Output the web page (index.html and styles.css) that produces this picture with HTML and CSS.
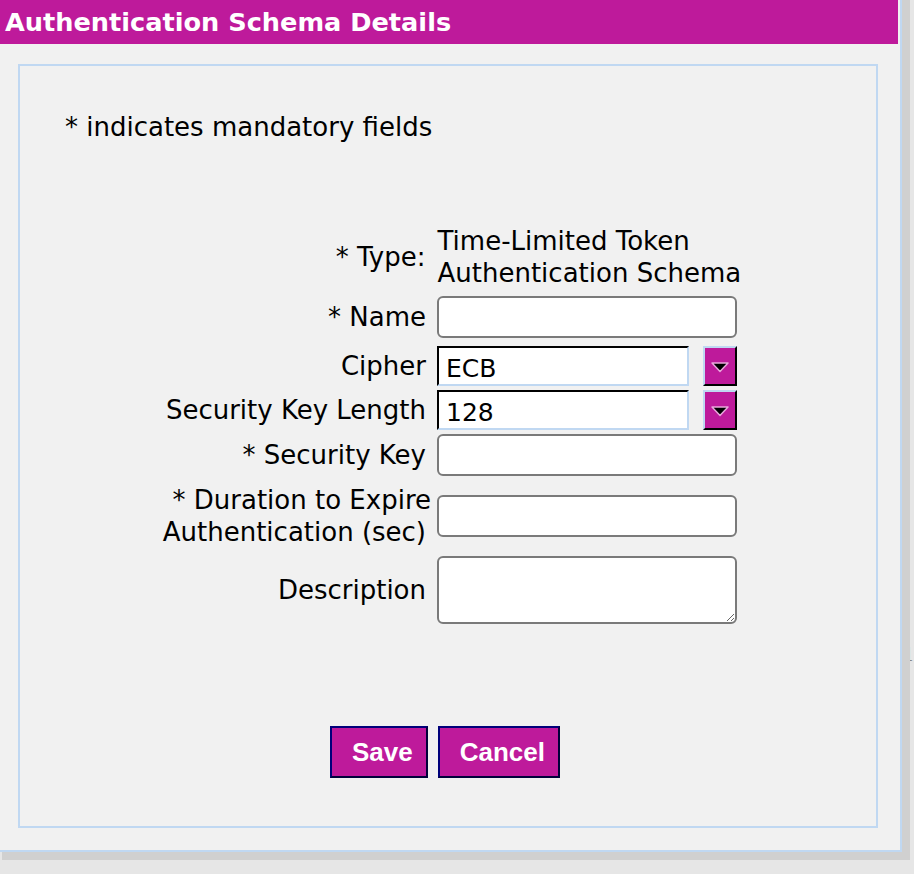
FILE: index.html
```html
<!DOCTYPE html>
<html lang="en">
<head>
<meta charset="utf-8">
<title>Authentication Schema Details</title>
<link rel="stylesheet" href="styles.css">
</head>
<body>
<span class="stray">1</span>
<div class="dialog">
  <div class="dialog-title">Authentication Schema Details</div>
  <div class="panel">
    <p class="note">* indicates mandatory fields</p>
    <div class="form">
      <div class="row row-type">
        <div class="label">* Type:</div>
        <div class="field value">Time-Limited Token<br>Authentication Schema</div>
      </div>
      <div class="row row-name">
        <div class="label">* Name</div>
        <div class="field"><input class="text-input" type="text"></div>
      </div>
      <div class="row row-cipher">
        <div class="label">Cipher</div>
        <div class="field combo">
          <div class="combo-box">ECB</div>
          <div class="combo-btn"><svg width="20" height="12" viewBox="0 0 20 12"><path d="M2 2 L18 2 L10 10.5 Z" fill="#000" stroke="#eaa6dc" stroke-width="1.5" stroke-linejoin="round"/></svg></div>
        </div>
      </div>
      <div class="row row-keylen">
        <div class="label">Security Key Length</div>
        <div class="field combo">
          <div class="combo-box">128</div>
          <div class="combo-btn"><svg width="20" height="12" viewBox="0 0 20 12"><path d="M2 2 L18 2 L10 10.5 Z" fill="#000" stroke="#eaa6dc" stroke-width="1.5" stroke-linejoin="round"/></svg></div>
        </div>
      </div>
      <div class="row row-key">
        <div class="label">* Security Key</div>
        <div class="field"><input class="text-input" type="text"></div>
      </div>
      <div class="row row-duration">
        <div class="label"><span class="hang">* Duration to Expire</span><br>Authentication (sec)</div>
        <div class="field"><input class="text-input" type="text"></div>
      </div>
      <div class="row row-desc">
        <div class="label">Description</div>
        <div class="field"><textarea class="text-area"></textarea></div>
      </div>
    </div>
    <div class="actions">
      <button class="btn" type="button">Save</button>
      <button class="btn" type="button">Cancel</button>
    </div>
  </div>
</div>
</body>
</html>
```
FILE: styles.css
```css
html, body {
  margin: 0;
  padding: 0;
}
body {
  background: #e6e6e6;
  font-family: "DejaVu Sans", Verdana, sans-serif;
  font-size: 26px;
  color: #000;
  overflow: hidden;
  height: 874px;
  position: relative;
}
.dialog {
  margin: -8px 0 0 -6px;
  width: 900px;
  border: 2px solid #c0d8f2;
  padding: 2px;
  background: #f1f1f1;
  box-shadow: 8px 8px 0 #d0d0d0;
}
.dialog-title {
  background: #be1a9b;
  color: #fff;
  font-weight: bold;
  font-size: 25.6px;
  line-height: 38px;
  padding: 7px 7px 3px;
  height: 38px;
  white-space: nowrap;
}
.panel {
  box-sizing: border-box;
  margin: 20px 20px 20px;
  height: 764px;
  border: 2px solid #c0d8f2;
  padding: 45px 45px 0;
}
.note {
  margin: 0;
  line-height: 32px;
}
.form {
  margin-top: 82px;
  display: flex;
  flex-direction: column;
  align-items: center;
}
.row {
  display: flex;
  align-items: center;
  gap: 11px;
}
.label {
  width: 267px;
  text-align: right;
  line-height: 32px;
  white-space: nowrap;
}
.hang {
  display: inline-block;
  margin-right: -5px;
}
.field {
  width: 300px;
}
.value {
  line-height: 32px;
  white-space: nowrap;
  padding-left: 1px;
}
.row-name { margin-top: 7px; }
.row-cipher { margin-top: 8px; }
.row-keylen { margin-top: 4px; }
.row-key { margin-top: 4px; }
.row-duration { margin-top: 8px; }
.row-desc { margin-top: 8px; }
.text-input {
  display: block;
  box-sizing: border-box;
  width: 300px;
  height: 42px;
  margin: 0;
  border: 2px solid #7a7a7a;
  border-radius: 6px;
  background: #fff;
  font: 24px "DejaVu Sans", sans-serif;
  padding: 0 6px;
}
.text-area {
  display: block;
  box-sizing: border-box;
  width: 300px;
  height: 68px;
  margin: 0;
  border: 2px solid #7a7a7a;
  border-radius: 6px;
  background: #fff;
  font: 24px "DejaVu Sans", sans-serif;
  padding: 4px 6px;
}
.combo {
  display: flex;
  justify-content: space-between;
  align-items: stretch;
  height: 40px;
}
.combo-box {
  box-sizing: border-box;
  width: 252px;
  height: 40px;
  background: #fff;
  border-style: solid;
  border-width: 2px;
  border-color: #000 #c0d8f2 #c0d8f2 #000;
  font-size: 25px;
  line-height: 36px;
  padding: 3px 0 0 7px;
}
.combo-btn {
  box-sizing: border-box;
  width: 34px;
  height: 40px;
  background: #be1a9b;
  border-style: solid;
  border-width: 2px;
  border-color: #c0d8f2 #000 #000 #c0d8f2;
  display: flex;
  align-items: center;
  justify-content: center;
  padding-top: 2px;
}
.combo-btn svg {
  display: block;
}
.actions {
  margin-top: 102px;
  display: flex;
  justify-content: center;
  gap: 10px;
  padding-right: 6px;
}
.btn {
  height: 52px;
  margin: 0;
  background: #be1a9b;
  color: #fff;
  font: bold 26px "Liberation Sans", Arial, sans-serif;
  border-style: solid;
  border-width: 2px;
  border-color: #00007a #00003a #00003a #00007a;
  padding: 0 13px 0 20px;
  cursor: pointer;
}
.stray {
  position: absolute;
  z-index: -1;
  left: 903px;
  top: 644px;
  font: 18px "DejaVu Serif", serif;
  color: #888;
}
```
